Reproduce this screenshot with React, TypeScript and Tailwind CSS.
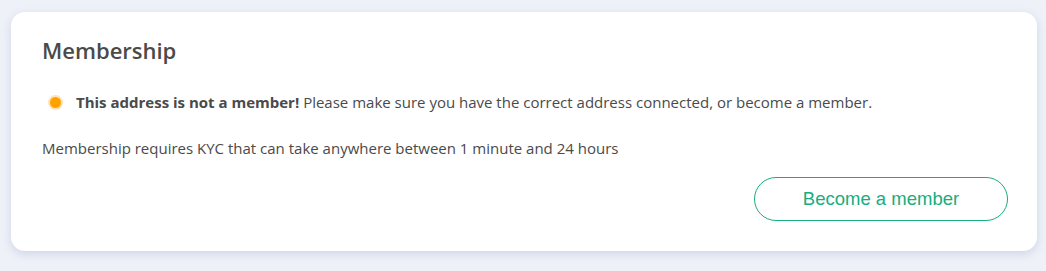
export default function App() {
  return (
    <div className="min-h-[271px] w-full bg-[#eef1f8] pl-[11px] pr-[9px] pt-[12px] pb-[20px]">
      <div
        className="flex w-[1026px] flex-col rounded-[14px] bg-white pl-[31px] pr-[29px] pt-[23px] pb-[30px] shadow-[0_3px_8px_rgba(170,180,210,0.45)] text-[#4a4a4a]"
        style={{ fontFamily: '"Open Sans", sans-serif' }}
      >
        <h2 className="text-[22px] font-semibold leading-[30px] text-[#4a4a4a]">Membership</h2>

        {/* Status */}
        <div className="mt-[27px] flex items-center gap-[13px] pl-[6px] text-[15px] leading-[20px]">
          <span className="h-[15px] w-[15px] shrink-0 rounded-full border-[2px] border-[#fde3bb] bg-[#ffa200]" />
          <p>
            <span className="font-bold">This address is not a member!</span> Please make sure you have the correct
            address connected, or become a member.
          </p>
        </div>

        <p className="mt-[26px] text-[15px] leading-[20px]">
          Membership requires KYC that can take anywhere between 1 minute and 24 hours
        </p>

        <div className="mt-[19px] flex justify-end">
          <button
            className="h-[44px] w-[254px] rounded-full border border-[#16ad7f] text-[18.5px] text-[#16ad7f]"
            style={{ fontFamily: '"Liberation Sans", Arial, sans-serif' }}
          >
            Become a member
          </button>
        </div>
      </div>
    </div>
  )
}
